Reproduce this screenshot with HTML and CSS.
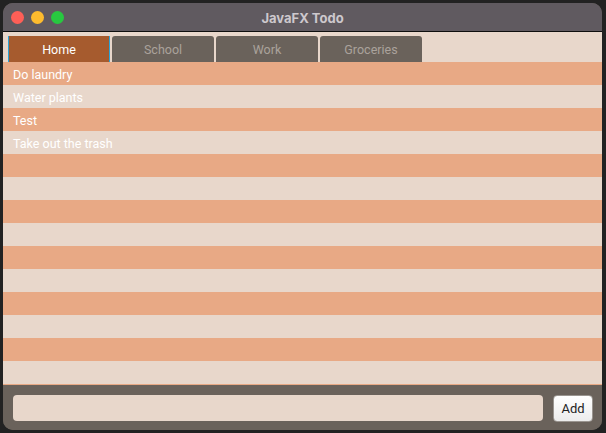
FILE: index.html
```html
<!DOCTYPE html>
<html>
<head>
<meta charset="utf-8">
<link rel="stylesheet" href="styles.css">
</head>
<body>
<div class="window">
  <div class="titlebar">
    <div class="lights">
      <span class="light red"></span>
      <span class="light yellow"></span>
      <span class="light green"></span>
    </div>
    <div class="title">JavaFX Todo</div>
  </div>
  <div class="tabs">
    <div class="tab active">Home</div>
    <div class="tab">School</div>
    <div class="tab">Work</div>
    <div class="tab">Groceries</div>
  </div>
  <div class="list">
    <div class="row odd">Do laundry</div>
    <div class="row even">Water plants</div>
    <div class="row odd">Test</div>
    <div class="row even">Take out the trash</div>
    <div class="row odd"></div>
    <div class="row even"></div>
    <div class="row odd"></div>
    <div class="row even"></div>
    <div class="row odd"></div>
    <div class="row even"></div>
    <div class="row odd"></div>
    <div class="row even"></div>
    <div class="row odd"></div>
    <div class="row even"></div>
  </div>
  <div class="bottom">
    <div class="field"></div>
    <div class="add">Add</div>
  </div>
</div>
</body>
</html>
```
FILE: styles.css
```css
html, body {
  margin: 0;
  padding: 0;
  background: #222222;
  width: 606px;
  height: 433px;
  overflow: hidden;
  font-family: "Roboto", "Liberation Sans", sans-serif;
}
.window {
  margin: 3px 4px 3px 3px;
  width: 599px;
  height: 427px;
  border-radius: 10px;
  overflow: hidden;
  display: flex;
  flex-direction: column;
  background: #6a625b;
}
.titlebar {
  height: 28px;
  background: #605a60;
  border-bottom: 1px solid #0e0e0e;
  display: flex;
  align-items: center;
  position: relative;
  flex: none;
}
.lights {
  display: flex;
  gap: 7px;
  padding-left: 8px;
}
.light {
  width: 13px;
  height: 13px;
  border-radius: 50%;
  display: block;
}
.red { background: #fe5f57; }
.yellow { background: #febc2e; }
.green { background: #28c840; }
.title {
  position: absolute;
  left: 0;
  right: 0;
  text-align: center;
  font-family: "Inter", "Roboto", sans-serif;
  font-weight: 700;
  font-size: 13px;
  color: #cdc8cd;
  top: 7px;
}
.tabs {
  height: 30px;
  background: #e8d7cb;
  display: flex;
  align-items: flex-end;
  gap: 2px;
  padding-left: 5px;
  box-sizing: border-box;
  flex: none;
}
.tab {
  width: 102px;
  height: 26px;
  box-sizing: border-box;
  background: #6a625b;
  color: #aaa29c;
  font-size: 12.5px;
  display: flex;
  align-items: center;
  justify-content: center;
  border-radius: 3px 3px 0 0;
}
.tab.active {
  background: #a65b2e;
  color: #ffffff;
  border-left: 1px solid #2aa4d8;
  border-right: 1px solid #2aa4d8;
  border-radius: 0;
}
.list {
  flex: none;
  border-bottom: 1px solid #e8a985;
}
.row {
  height: 23px;
  box-sizing: border-box;
  padding-left: 10px;
  padding-top: 1px;
  display: flex;
  align-items: center;
  font-size: 12.5px;
  color: #ffffff;
}
.odd { background: #e8a985; }
.even { background: #e8d7cb; }
.bottom {
  flex: 1;
  background: #6a625b;
  display: flex;
  align-items: flex-start;
  padding: 10px 9px 0 10px;
  gap: 10px;
}
.field {
  flex: 1;
  height: 26px;
  background: #e8d7cb;
  border-radius: 4px;
}
.add {
  width: 40px;
  height: 27px;
  box-sizing: border-box;
  border: 1px solid #9a9590;
  border-radius: 4px;
  background: linear-gradient(#ffffff, #ececec);
  color: #222222;
  font-size: 13px;
  display: flex;
  align-items: center;
  justify-content: center;
}
```
